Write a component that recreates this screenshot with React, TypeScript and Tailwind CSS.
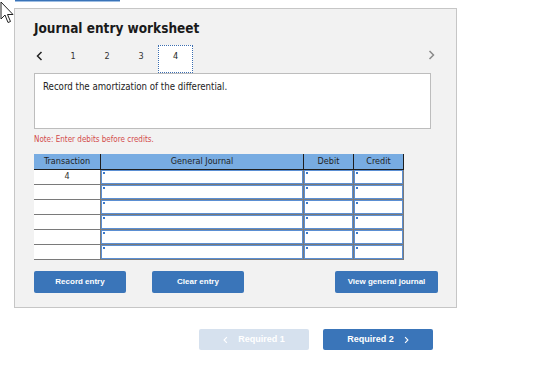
import React from "react";

const cond = "font-['DejaVu_Sans_Condensed','DejaVu_Sans',sans-serif]";
const arial = "font-['Liberation_Sans',Arial,sans-serif]";

function InputCell({ w }: { w: string }) {
  return (
    <div className={`${w} h-full border-l border-[#7a7a7a]`}>
      <div className="relative h-full border border-[#5b8fd3] bg-white">
        <span className="absolute left-[1px] top-[1px] h-[2px] w-[2px] bg-[#3b78c8]" />
      </div>
    </div>
  );
}

function Row({ label }: { label?: string }) {
  return (
    <div className="flex h-[15px] w-[370px] border-b border-r border-[#7a7a7a]">
      <div className={`w-[66px] h-full bg-white flex items-center justify-center text-[9px] text-[#333] ${cond}`}>
        {label}
      </div>
      <InputCell w="w-[203px]" />
      <InputCell w="w-[50px]" />
      <InputCell w="w-[50px]" />
    </div>
  );
}

function ChevronLeft({ cls }: { cls: string }) {
  return (
    <svg width="7" height="10" viewBox="0 0 7 10" className={cls}>
      <path d="M5.5 1 L1.5 5 L5.5 9" fill="none" stroke="currentColor" strokeWidth="1.5" />
    </svg>
  );
}
function ChevronRight({ cls }: { cls: string }) {
  return (
    <svg width="7" height="10" viewBox="0 0 7 10" className={cls}>
      <path d="M1.5 1 L5.5 5 L1.5 9" fill="none" stroke="currentColor" strokeWidth="1.5" />
    </svg>
  );
}

export default function App() {
  const tabs = ["1", "2", "3"];
  return (
    <div className="relative w-[538px] h-[369px] bg-white overflow-hidden">
      {/* cursor overlay */}
      <svg className="absolute left-0 top-0" width="16" height="26" viewBox="0 0 16 26">
        <path
          d="M1 2 L1 19 L5 15 L8 22.5 L10.5 21.5 L7.5 14.5 L13 14.5 Z"
          fill="white"
          stroke="#222"
          strokeWidth="1"
          strokeLinejoin="miter"
        />
      </svg>

      <div className="ml-[15px] w-[105px] h-[2px] border-t border-[#3a73b8] bg-[#9dbde2]" />

      <div className="ml-[14px] mt-[6px] w-[443px] h-[300px] border border-[#c6c6c6] bg-[#f2f2f2] pl-[19px] pt-[11px]">
        <div className={`text-[13.5px] leading-[16px] font-bold text-[#1a1a1a] ${cond}`}>
          Journal entry worksheet
        </div>

        <div className="mt-[9px] flex h-[28px] pr-[21px]">
          <div className="w-[22px] flex items-start pt-[6px] pl-[2px] text-[#222]">
            <ChevronLeft cls="" />
          </div>
          {tabs.map((t) => (
            <div
              key={t}
              className={`w-[34px] text-center pt-[5px] text-[9px] leading-[12px] text-[#333] ${cond}`}
            >
              {t}
            </div>
          ))}
          <div
            className={`w-[35px] h-[28px] border border-dotted border-[#3b6db0] bg-white text-center pt-[4px] text-[9px] leading-[12px] text-[#222] ${cond}`}
          >
            4
          </div>
          <div className="ml-auto pt-[5px] text-[#8a8a8a]">
            <ChevronRight cls="" />
          </div>
        </div>

        <div
          className={`w-[397px] h-[56px] border border-[#bdbdbd] bg-white pl-[8px] pt-[7px] text-[9.6px] leading-[12px] text-[#222] ${cond}`}
        >
          Record the amortization of the differential.
        </div>

        <div className={`mt-[6px] text-[8px] leading-[10px] text-[#d24b4b] ${cond}`}>
          Note: Enter debits before credits.
        </div>

        <div className="mt-[9px] w-[370px]">
          <div
            className={`flex h-[16px] w-[370px] bg-[#78ace2] border-b border-r border-[#1e1e1e] text-[9px] leading-[15px] text-[#1f1f1f] ${cond}`}
          >
            <div className="w-[66px] text-center">Transaction</div>
            <div className="w-[203px] border-l border-[#1e1e1e] text-center">General Journal</div>
            <div className="w-[50px] border-l border-[#1e1e1e] text-center">Debit</div>
            <div className="w-[50px] border-l border-[#1e1e1e] text-center">Credit</div>
          </div>
          <Row label="4" />
          <Row />
          <Row />
          <Row />
          <Row />
          <Row />
        </div>

        <div className={`mt-[11px] flex w-[404px] text-[8px] font-bold text-white ${arial}`}>
          <button className="w-[92px] h-[22px] rounded-[2px] bg-[#3a75b9]">Record entry</button>
          <button className="ml-[26px] w-[92px] h-[22px] rounded-[2px] bg-[#3a75b9]">Clear entry</button>
          <button className="ml-auto w-[103px] h-[22px] rounded-[2px] bg-[#3a75b9]">View general journal</button>
        </div>
      </div>

      <div className={`mt-[21px] ml-[199px] flex gap-[14px] text-[9px] font-bold text-white ${arial}`}>
        <button className="w-[110px] h-[21px] rounded-[2px] bg-[#d6e1ee] flex items-center justify-center gap-[10px]">
          <ChevronLeft cls="w-[5px] h-[8px]" />
          <span>Required 1</span>
        </button>
        <button className="w-[110px] h-[21px] rounded-[2px] bg-[#3a75b9] flex items-center justify-center gap-[10px]">
          <span>Required 2</span>
          <ChevronRight cls="w-[5px] h-[8px]" />
        </button>
      </div>
    </div>
  );
}
